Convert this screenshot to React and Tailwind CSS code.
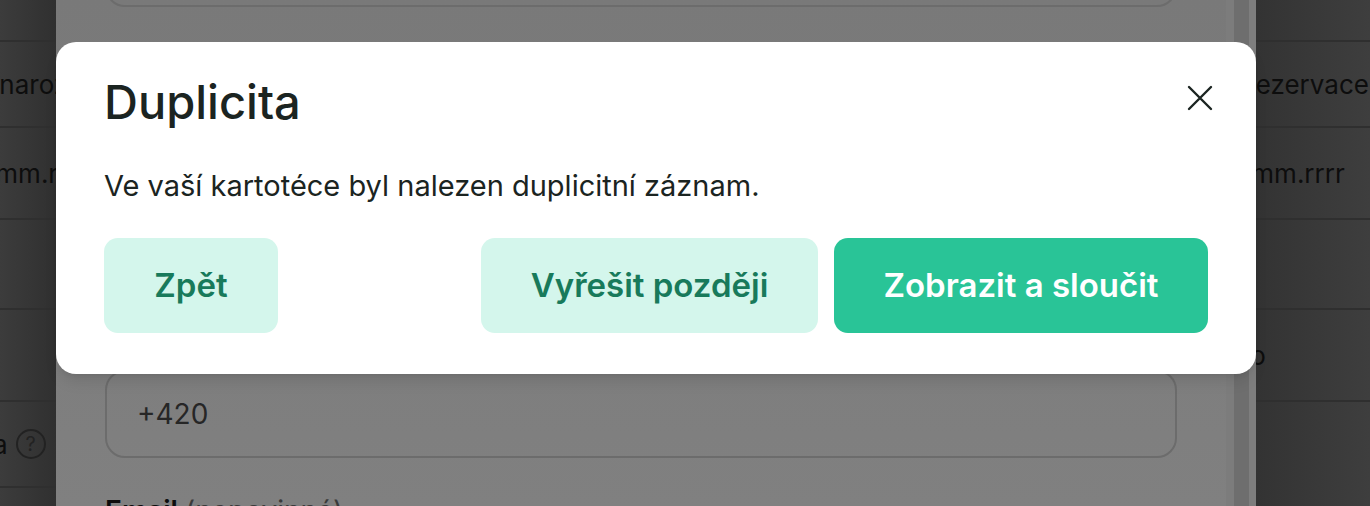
import React from 'react';

const leftRows = [
  { h: 42, text: '' },
  { h: 86, text: 'Datum narození', shift: -88 },
  { h: 92, text: 'dd.mm.rrrr', shift: -44 },
  { h: 90, text: '' },
  { h: 92, text: '' },
  { h: 86, text: 'Pojišťovna', shift: -120, help: true },
];

const rightRows = [
  { h: 42, text: '' },
  { h: 86, text: 'Datum rezervace', shift: -97 },
  { h: 92, text: 'dd.mm.rrrr', shift: -44 },
  { h: 90, text: '' },
  { h: 92, text: 'Ano', shift: -39 },
];

const CloseIcon = () => (
  <svg width="28" height="28" viewBox="0 0 28 28" fill="none">
    <path d="M3 3L25 25M25 3L3 25" stroke="#1b2421" strokeWidth="2.4" strokeLinecap="round" />
  </svg>
);

const App = () => {
  return (
    <div className="relative h-[506px] w-[1370px] overflow-hidden bg-[#3a3a3a] font-['Inter',sans-serif]">
      <div className="flex h-full">
        {/* left page column, dimmed twice */}
        <div className="w-[56px] shrink-0 overflow-hidden bg-gradient-to-r from-[#3c3c3c] to-[#303030]">
          {leftRows.map((row, i) => (
            <div
              key={i}
              style={{ height: row.h }}
              className="flex items-center whitespace-nowrap border-b-2 border-[#2f2f2f] text-[26px] text-[#0d0d0d]"
            >
              {row.text && (
                <span style={{ marginLeft: row.shift }} className="flex items-center">
                  {row.text}
                  {row.help && (
                    <span className="ml-[8px] flex h-[30px] w-[30px] items-center justify-center rounded-full border-2 border-[#222] text-[20px] text-[#222]">
                      ?
                    </span>
                  )}
                </span>
              )}
            </div>
          ))}
        </div>

        {/* drawer */}
        <div className="flex w-[1200px] shrink-0 bg-gradient-to-b from-[#797979] to-[#808080]">
          <div className="flex-1 px-[49px]">
            <div className="mt-[-80px] h-[87px] rounded-[20px] border-2 border-[#6c6c6c]" />
            <div className="mt-[363px] flex h-[88px] items-center rounded-[20px] border-2 border-[#6c6c6c] px-[30px] text-[28px] text-[#262626]">
              +420
            </div>
            <div className="mt-[37px] text-[28px] font-semibold leading-[32px] text-[#0d0d0d]">
              Email <span className="font-normal text-[#3a3a3a]">(nepovinné)</span>
            </div>
          </div>
          <div className="flex w-[30px]">
            <div className="w-[8px] bg-[#7c7c7c]" />
            <div className="w-[15px] bg-[#6e6e6e]" />
            <div className="w-[7px] bg-[#7e7e7e]" />
          </div>
        </div>

        {/* right page column */}
        <div className="flex-1 overflow-hidden bg-gradient-to-r from-[#333333] to-[#3e3e3e]">
          {rightRows.map((row, i) => (
            <div
              key={i}
              style={{ height: row.h }}
              className="flex items-center whitespace-nowrap border-b-2 border-[#2f2f2f] text-[26px] text-[#0d0d0d]"
            >
              {row.text && <span style={{ marginLeft: row.shift }}>{row.text}</span>}
            </div>
          ))}
        </div>
      </div>

      {/* modal */}
      <div className="absolute left-[56px] top-[42px] flex h-[332px] w-[1200px] flex-col rounded-[20px] bg-white px-12 pt-[34px] shadow-lg">
        <div className="flex items-start justify-between">
          <h2 className="text-[47px] font-medium leading-[52px] text-[#1b2421]">Duplicita</h2>
          <button type="button" className="mr-[-6px] mt-[8px]">
            <CloseIcon />
          </button>
        </div>
        <p className="mt-[40px] text-[29px] leading-[36px] text-[#1b2421]">
          Ve vaší kartotéce byl nalezen duplicitní záznam.
        </p>
        <div className="mt-[34px] flex gap-4">
          <button
            type="button"
            className="h-[95px] w-[174px] rounded-[14px] bg-[#d4f6ec] text-[33px] font-semibold text-[#187a5b]"
          >
            Zpět
          </button>
          <div className="flex-1" />
          <button
            type="button"
            className="h-[95px] w-[337px] rounded-[14px] bg-[#d4f6ec] text-[33px] font-semibold text-[#187a5b]"
          >
            Vyřešit později
          </button>
          <button
            type="button"
            className="h-[95px] w-[374px] rounded-[14px] bg-[#29c497] text-[33px] font-semibold text-white"
          >
            Zobrazit a sloučit
          </button>
        </div>
      </div>
    </div>
  );
};

export default App;
